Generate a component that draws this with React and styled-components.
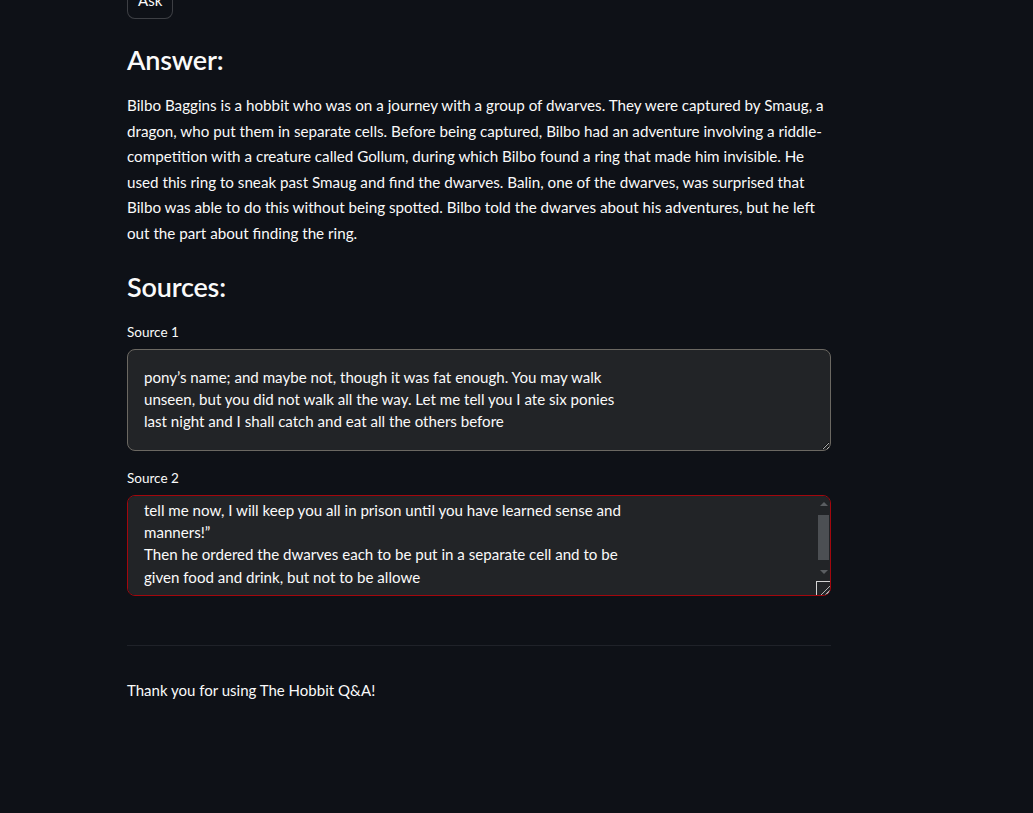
import React, { useEffect, useRef } from 'react'
import styled, { createGlobalStyle } from 'styled-components'

const Global = createGlobalStyle`
    html, body {
        margin: 0;
        padding: 0;
        background: #0e1117;
    }
    body {
        font-family: Lato, "Noto Sans", sans-serif;
        color: #fafafa;
    }
`

const Viewport = styled.div`
    height: 813px;
    overflow: hidden;
    background: #0e1117;
`

const Main = styled.div`
    width: 704px;
    margin: -19px 0 0 127px;
    display: flex;
    flex-direction: column;
`

const AskButton = styled.button`
    align-self: flex-start;
    height: 38px;
    padding: 0 10px;
    background: #0e1117;
    color: #fafafa;
    border: 1px solid rgba(250, 250, 250, 0.2);
    border-radius: 8px;
    font-family: inherit;
    font-size: 15px;
`

const Heading = styled.h3`
    margin: ${(p) => p.top}px 0 0 0;
    font-size: 27px;
    font-weight: 600;
    line-height: 34px;
    letter-spacing: -0.2px;
`

const Paragraph = styled.p`
    margin: 16px 0 0 0;
    font-size: 15.2px;
    line-height: 25.6px;
    white-space: nowrap;
`

const Label = styled.label`
    display: block;
    margin-top: ${(p) => p.top}px;
    font-size: 13.5px;
    line-height: 21px;
`

const Field = styled.div`
    position: relative;
    margin-top: 6px;
    width: 704px;
`

const TextArea = styled.textarea`
    display: block;
    box-sizing: border-box;
    width: 704px;
    height: ${(p) => p.h}px;
    padding: 16px;
    background: #222427;
    color: #fafafa;
    border: 1px solid ${(p) => (p.focused ? '#a3070d' : '#6b6862')};
    border-radius: 8px;
    font-family: Lato, "Noto Sans", sans-serif;
    font-size: 15.1px;
    line-height: 22.4px;
    outline: none;
    resize: vertical;
`

/* drawn scrollbar, the headless browser hides native ones */
const ScrollTrack = styled.div`
    position: absolute;
    top: 1px;
    right: 2px;
    width: 11px;
    height: 83px;
    pointer-events: none;
`

const Arrow = styled.div`
    position: absolute;
    left: 2px;
    top: ${(p) => (p.down ? 74 : 6)}px;
    width: 0;
    height: 0;
    border-left: 4px solid transparent;
    border-right: 4px solid transparent;
    ${(p) => (p.down ? 'border-top: 4px solid #5a5d61;' : 'border-bottom: 4px solid #5a5d61;')}
`

const Thumb = styled.div`
    position: absolute;
    left: 0;
    top: 19px;
    width: 11px;
    height: 45px;
    background: #4c4f53;
`

const Corner = styled.div`
    position: absolute;
    right: 1px;
    bottom: 1px;
    width: 14px;
    height: 14px;
    box-sizing: border-box;
    border-top: 1px solid #d4d4d4;
    border-left: 1px solid #d4d4d4;
    background:
        linear-gradient(135deg, transparent 62%, #b5b5b5 62%, #b5b5b5 69%, transparent 69%, transparent 80%, #b5b5b5 80%, #b5b5b5 87%, transparent 87%),
        #222427;
    border-bottom-right-radius: 7px;
    pointer-events: none;
`

const Divider = styled.hr`
    margin: 49px 0 0 0;
    border: none;
    border-top: 1px solid #1f2229;
    width: 704px;
`

const Footer = styled.p`
    margin: 32px 0 0 0;
    font-size: 15px;
    line-height: 25.6px;
`

const answer = [
    'Bilbo Baggins is a hobbit who was on a journey with a group of dwarves. They were captured by Smaug, a',
    'dragon, who put them in separate cells. Before being captured, Bilbo had an adventure involving a riddle-',
    'competition with a creature called Gollum, during which Bilbo found a ring that made him invisible. He',
    'used this ring to sneak past Smaug and find the dwarves. Balin, one of the dwarves, was surprised that',
    'Bilbo was able to do this without being spotted. Bilbo told the dwarves about his adventures, but he left',
    'out the part about finding the ring.',
]

const source1 = `pony’s name; and maybe not, though it was fat enough. You may walk
unseen, but you did not walk all the way. Let me tell you I ate six ponies
last night and I shall catch and eat all the others before`

const source2 = `tell me now, I will keep you all in prison until you have learned sense and
manners!”
Then he ordered the dwarves each to be put in a separate cell and to be
given food and drink, but not to be allowe`

const App = () => {
    const ref = useRef(null)
    useEffect(() => {
        if (ref.current) ref.current.scrollTop = 13
    }, [])

    return (
        <Viewport>
            <Global />
            <Main>
                <AskButton>Ask</AskButton>
                <Heading top={24}>Answer:</Heading>
                <Paragraph>
                    {answer.map((line, i) => (
                        <React.Fragment key={i}>
                            {line}
                            {i < answer.length - 1 && <br />}
                        </React.Fragment>
                    ))}
                </Paragraph>
                <Heading top={23}>Sources:</Heading>
                <Label top={18}>Source 1</Label>
                <Field>
                    <TextArea h={102} defaultValue={source1} />
                </Field>
                <Label top={17}>Source 2</Label>
                <Field>
                    <TextArea h={101} focused ref={ref} defaultValue={source2} />
                    <ScrollTrack>
                        <Arrow />
                        <Thumb />
                        <Arrow down />
                    </ScrollTrack>
                    <Corner />
                </Field>
                <Divider />
                <Footer>Thank you for using The Hobbit Q&amp;A!</Footer>
            </Main>
        </Viewport>
    )
}

export default App
